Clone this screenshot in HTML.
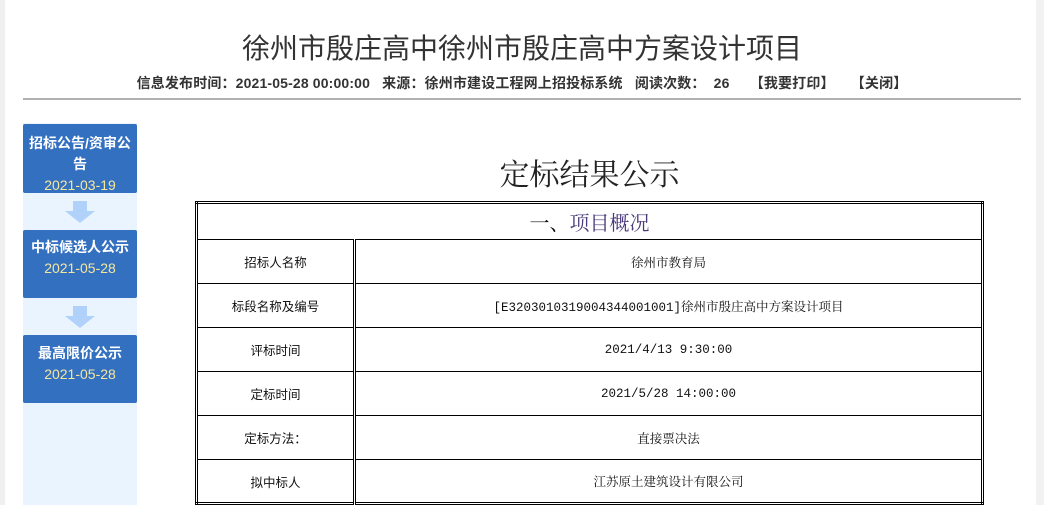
<!DOCTYPE html>
<html><head><meta charset="utf-8"><style>
*{margin:0;padding:0;box-sizing:border-box}
body{width:1044px;height:505px;overflow:hidden;background:#fff;position:relative;font-family:"Liberation Sans","Noto Sans CJK SC",sans-serif;color:#222}
.edgeL{position:absolute;left:0;top:0;width:5px;height:505px;background:#f0f0f0}
.edgeR{position:absolute;right:0;top:0;width:8px;height:505px;background:#f2f2f2}
h1{position:absolute;top:27px;left:0;width:1044px;text-align:center;font-weight:normal;font-size:28px;color:#333}
.meta{position:absolute;top:73px;left:0;width:1044px;text-align:center;font-size:14px;font-weight:bold;color:#333;white-space:nowrap;letter-spacing:0.15px}
.line{position:absolute;top:98px;left:23px;width:998px;height:2px;background:#b0b0b0}
.side{position:absolute;left:23px;top:123px;width:114px;height:382px;background:#eaf4fe}
.box{position:absolute;left:23px;width:114px;background:#3370c0;color:#fff;text-align:center;font-weight:bold;font-size:14px;line-height:21px;border-radius:2px}
.box span{display:block;color:#f5e6a0;font-weight:normal;font-size:14px}
.arrow{position:absolute;left:64px;width:32px;height:22px}
h2{position:absolute;top:150px;left:195px;width:789px;text-align:center;font-weight:normal;font-size:30px;font-family:"Noto Serif CJK SC","Liberation Serif",serif;color:#222}
table{position:absolute;left:195px;top:201px;width:789px;border-collapse:collapse;border:3px double #000;font-family:"Liberation Mono","Noto Serif CJK SC",monospace;font-size:12.5px;color:#111}
td{border:1px solid #000;text-align:center;height:44px}
td.c1{width:158px;border-right:3px double #000;font-family:"Noto Sans CJK SC",sans-serif}
.th{height:37px;font-size:20px;font-weight:normal;font-family:"Noto Serif CJK SC",serif}
</style></head><body>
<div class="edgeL"></div><div class="edgeR"></div>
<h1>徐州市殷庄高中徐州市殷庄高中方案设计项目</h1>
<div class="meta">信息发布时间：2021-05-28 00:00:00&nbsp;&nbsp;&nbsp;来源：徐州市建设工程网上招投标系统&nbsp;&nbsp;&nbsp;阅读次数：&nbsp;&nbsp;26&nbsp;&nbsp;&nbsp;&nbsp;&nbsp;【我要打印】&nbsp;&nbsp;&nbsp;&nbsp;【关闭】</div>
<div class="line"></div>
<div class="side"></div>
<div class="box" style="top:124px;height:69px;padding-top:9px">招标公告/资审公告<span>2021-03-19</span></div>
<svg class="arrow" style="top:201px" viewBox="0 0 32 22"><path d="M9 0h14v10h8L16 22 1 10h8z" fill="#b0d2fa"/></svg>
<div class="box" style="top:230px;height:68px;padding-top:7px">中标候选人公示<span>2021-05-28</span></div>
<svg class="arrow" style="top:306px" viewBox="0 0 32 22"><path d="M9 0h14v10h8L16 22 1 10h8z" fill="#b0d2fa"/></svg>
<div class="box" style="top:335px;height:68px;padding-top:8px">最高限价公示<span>2021-05-28</span></div>
<h2>定标结果公示</h2>
<table>
<tr><td colspan="2" class="th">一、<span style="color:#4a3a7a">项目概况</span></td></tr>
<tr><td class="c1">招标人名称</td><td>徐州市教育局</td></tr>
<tr><td class="c1">标段名称及编号</td><td>[E3203010319004344001001]徐州市殷庄高中方案设计项目</td></tr>
<tr><td class="c1">评标时间</td><td>2021/4/13 9:30:00</td></tr>
<tr><td class="c1">定标时间</td><td>2021/5/28 14:00:00</td></tr>
<tr><td class="c1">定标方法：</td><td>直接票决法</td></tr>
<tr><td class="c1">拟中标人</td><td>江苏原土建筑设计有限公司</td></tr>
</table>
</body></html>
